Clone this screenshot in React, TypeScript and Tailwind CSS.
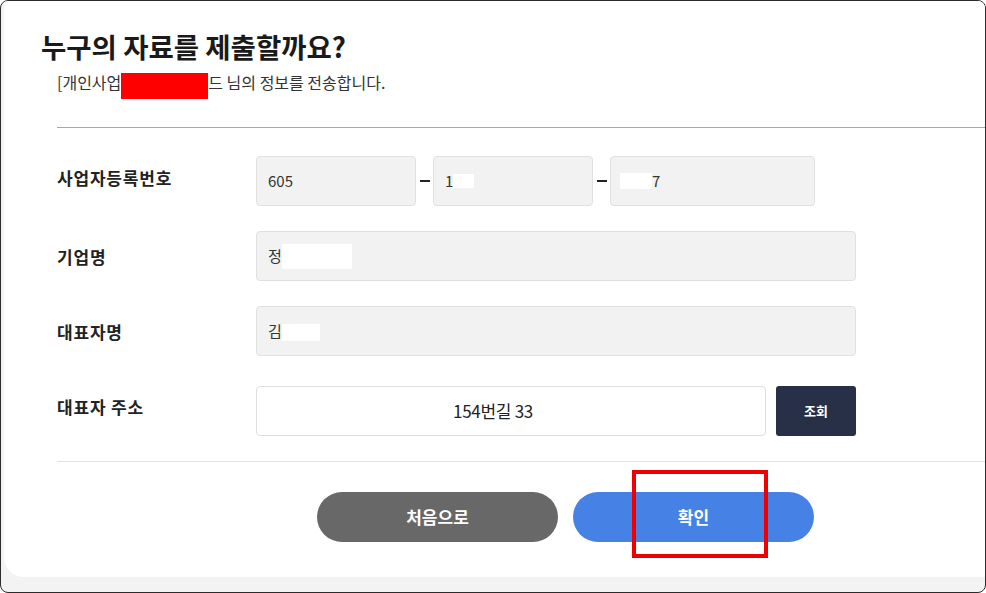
import React from "react";

const font = { fontFamily: '"Noto Sans CJK KR", "Noto Sans", sans-serif' };

// 회색 읽기전용 입력칸
function Field({ className = "", children }: { className?: string; children?: React.ReactNode }) {
  return (
    <div className={`h-[50px] rounded-[4px] border border-[#e0e0e0] bg-[#f2f2f2] flex items-center px-[11px] text-[15px] text-[#333] ${className}`}>
      {children}
    </div>
  );
}

function Dash() {
  return <div className="w-[10px] h-[2px] bg-[#222] ml-[4px] mr-[3px] shrink-0" />;
}

function Label({ className = "", children }: { className?: string; children: React.ReactNode }) {
  return (
    <div className={`w-[199px] shrink-0 text-[17px] tracking-[0.8px] font-bold text-[#222] ${className}`}>
      {children}
    </div>
  );
}

export default function App() {
  return (
    <div
      className="w-[986px] h-[593px] border-[1.5px] border-[#2b2b2b] rounded-[8px] overflow-hidden bg-[#f3f3f3] flex flex-col"
      style={font}
    >
      <div className="relative h-[576px] bg-white rounded-bl-[20px] ml-[3px] shrink-0">
        {/* 제목 */}
        <div className="pl-[37px] pt-[28px] h-[62px] text-[27.5px] leading-[34px] font-bold text-[#1a1a1a]">
          누구의 자료를 제출할까요?
        </div>
        <div className="flex items-start pl-[53px] mt-[9px] h-[26px] text-[16px] leading-[20px] text-[#333]">
          <span>[개인사업</span>
          <span className="inline-block w-[87px] h-[26px] bg-[#ff0000] mt-[1px]" />
          <span>드 님의 정보를 전송합니다.</span>
        </div>

        <div className="ml-[53px] mt-[29px] h-px bg-[#a8a8a8]" />

        {/* 입력 영역 */}
        <div className="pl-[53px] mt-[28px] flex flex-col gap-[25px]">
          <div className="flex items-center">
            <Label className="pb-[6px]">사업자등록번호</Label>
            <Field className="w-[160px]">605</Field>
            <Dash />
            <Field className="w-[160px]">
              1<span className="inline-block w-[21px] h-[14px] bg-white" />
            </Field>
            <Dash />
            <Field className="w-[205px] pl-[9px]">
              <span className="inline-block w-[32px] h-[16px] bg-white" />7
            </Field>
          </div>
          <div className="flex items-center">
            <Label className="pt-[1px]">기업명</Label>
            <Field className="w-[600px]">
              정<span className="inline-block w-[70px] h-[25px] bg-white" />
            </Field>
          </div>
          <div className="flex items-center">
            <Label className="pt-[1px]">대표자명</Label>
            <Field className="w-[600px]">
              김<span className="inline-block w-[38px] h-[17px] bg-white mt-[2px]" />
            </Field>
          </div>
          <div className="flex items-center mt-[5px]">
            <Label className="pb-[8px]">대표자 주소</Label>
            <div className="w-[510px] h-[50px] rounded-[4px] border border-[#dedede] bg-white flex items-center justify-center pr-[36px] text-[17px] tracking-[-0.3px] text-[#222]">
              154번길 33
            </div>
            <button className="ml-[10px] w-[80px] h-[50px] rounded-[3px] bg-[#283048] text-white text-[13px] font-bold">
              조회
            </button>
          </div>
        </div>

        <div className="ml-[53px] mt-[25px] h-px bg-[#e3e3e3]" />

        {/* 하단 버튼 */}
        <div className="flex gap-[15px] ml-[313px] mt-[30px]">
          <button className="w-[241px] h-[50px] rounded-full bg-[#686868] text-white text-[17px] font-bold">
            처음으로
          </button>
          <button className="w-[241px] h-[50px] rounded-full bg-[#4681e6] text-white text-[17px] font-bold">
            확인
          </button>
        </div>

        {/* 강조 표시 박스 */}
        <div className="absolute left-[628px] top-[469px] w-[136px] h-[88px] border-[4px] border-[#ee0000]" />
      </div>
    </div>
  );
}
